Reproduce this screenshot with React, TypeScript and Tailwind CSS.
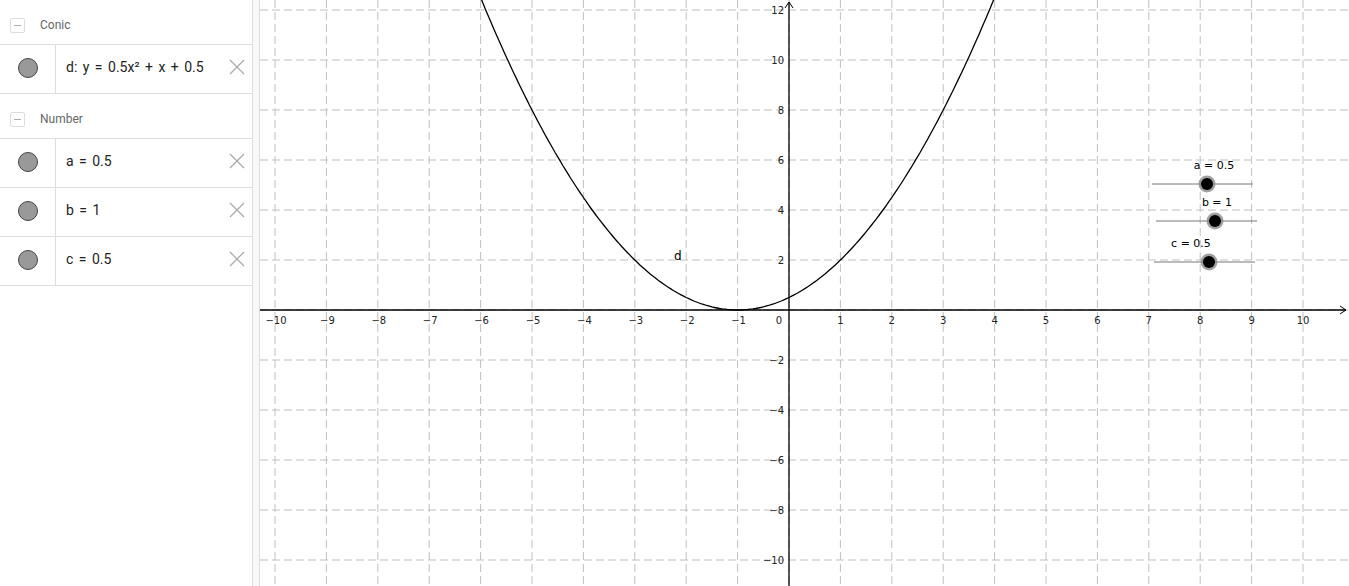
import React from 'react';

const W = 1089;
const H = 586;
const OX = 529;
const OY = 310;
const SX = 51.4;
const SY = 25;

const px = (x: number) => OX + x * SX;
const py = (y: number) => OY - y * SY;

const parabola = () => {
  const pts: string[] = [];
  for (let x = -6.3; x <= 4.3; x += 0.05) {
    const y = 0.5 * x * x + x + 0.5;
    pts.push(`${px(x).toFixed(1)},${py(y).toFixed(1)}`);
  }
  return 'M' + pts.join(' L');
};

const Slider = ({ x1, x2, y, dot, label, lx }: { x1: number; x2: number; y: number; dot: number; label: string; lx: number }) => (
  <g>
    <text x={lx} y={y - 15} fontSize="11" fill="#000" textAnchor="middle" fontFamily="'DejaVu Sans', sans-serif">
      {label}
    </text>
    <line x1={x1} y1={y} x2={x2} y2={y} stroke="#777" strokeWidth="1" />
    <circle cx={dot} cy={y} r="8.5" fill="#888" opacity="0.8" />
    <circle cx={dot} cy={y} r="6" fill="#000" />
  </g>
);

const Graph = () => {
  const vx: number[] = [];
  for (let k = -10; k <= 10; k++) vx.push(px(k));
  const hy: number[] = [];
  for (let k = 12; k >= -10; k -= 2) hy.push(py(k));

  return (
    <svg width={W} height={H} className="block">
      {vx.map((x, i) => (
        <line key={'v' + i} x1={x} y1={0} x2={x} y2={H} stroke="#c0c0c0" strokeDasharray="8 4" />
      ))}
      {hy.map((y, i) => (
        <line key={'h' + i} x1={0} y1={y} x2={W} y2={y} stroke="#c0c0c0" strokeDasharray="8 4" />
      ))}

      {/* axes */}
      <line x1={0} y1={OY} x2={W - 3} y2={OY} stroke="#000" strokeWidth="1.3" />
      <path d={`M${W - 9},${OY - 4} L${W - 3},${OY} L${W - 9},${OY + 4}`} fill="none" stroke="#000" strokeWidth="1" />
      <line x1={OX} y1={2} x2={OX} y2={H} stroke="#000" strokeWidth="1.3" />
      <path d={`M${OX - 4},${8} L${OX},${2} L${OX + 4},${8}`} fill="none" stroke="#000" strokeWidth="1" />

      {/* x labels */}
      {Array.from({ length: 21 }, (_, i) => i - 10).map((k) =>
        k === 0 ? (
          <text key={'xl' + k} x={OX - 10} y={OY + 14} fontSize="10" fill="#222" textAnchor="middle" fontFamily="'DejaVu Sans', sans-serif">
            0
          </text>
        ) : (
          <text key={'xl' + k} x={px(k) + (k < 0 ? 1 : 0)} y={OY + 14} fontSize="10" fill="#222" textAnchor="middle" fontFamily="'DejaVu Sans', sans-serif">
            {k < 0 ? '\u2212' + -k : k}
          </text>
        )
      )}

      {/* y labels */}
      {[12, 10, 8, 6, 4, 2, -2, -4, -6, -8, -10].map((k) => (
        <text key={'yl' + k} x={OX - 5} y={py(k) + 4} fontSize="10" fill="#222" textAnchor="end" fontFamily="'DejaVu Sans', sans-serif">
          {k < 0 ? '\u2212' + -k : k}
        </text>
      ))}

      <path d={parabola()} fill="none" stroke="#000" strokeWidth="1.3" />
      <text x={414} y={260} fontSize="12" fill="#000" fontFamily="'DejaVu Sans', sans-serif">
        d
      </text>

      <Slider x1={892} x2={993} y={184} dot={947} label="a = 0.5" lx={954} />
      <Slider x1={896} x2={997} y={221} dot={955} label="b = 1" lx={957} />
      <Slider x1={894} x2={995} y={262} dot={949} label="c = 0.5" lx={931} />
    </svg>
  );
};

const Header = ({ title }: { title: string }) => (
  <div className="flex items-center h-[44px] pl-[10px] pt-[6px]">
    <div className="w-[15px] h-[15px] border border-[#ddd] rounded-[2px] flex items-center justify-center">
      <div className="w-[7px] h-px bg-[#aaa]" />
    </div>
    <span className="ml-[15px] text-[12px] text-[#666]">{title}</span>
  </div>
);

const Row = ({ text }: { text: React.ReactNode }) => (
  <div className="flex h-[49px] border-b border-[#ddd]">
    <div className="w-[56px] border-r border-[#ddd] flex items-center justify-center pb-[3px]">
      <div className="w-[20px] h-[20px] rounded-full bg-[#999] border border-[#444]" />
    </div>
    <div className="flex-1 flex items-center pl-[10px] pb-[4px] text-[14px] text-[#222] [word-spacing:2px]">{text}</div>
    <div className="w-[30px] flex items-center justify-center pb-[4px]">
      <svg width="16" height="16" viewBox="0 0 16 16">
        <path d="M1 1 L15 15 M15 1 L1 15" stroke="#aaa" strokeWidth="1.3" />
      </svg>
    </div>
  </div>
);

export default function App() {
  return (
    <div className="flex h-[586px] w-[1349px] overflow-hidden bg-white" style={{ fontFamily: 'Roboto, sans-serif' }}>
      <div className="w-[252px] shrink-0">
        <Header title="Conic" />
        <div className="border-t border-[#ddd]">
          <Row text={<span>d: y = 0.5x² + x + 0.5</span>} />
        </div>
        <Header title="Number" />
        <div className="border-t border-[#ddd]">
          <Row text="a = 0.5" />
          <Row text="b = 1" />
          <Row text="c = 0.5" />
        </div>
      </div>
      <div className="w-[8px] shrink-0 bg-[#f8f8f8] border-x border-[#ddd]" />
      <div className="flex-1">
        <Graph />
      </div>
    </div>
  );
}
